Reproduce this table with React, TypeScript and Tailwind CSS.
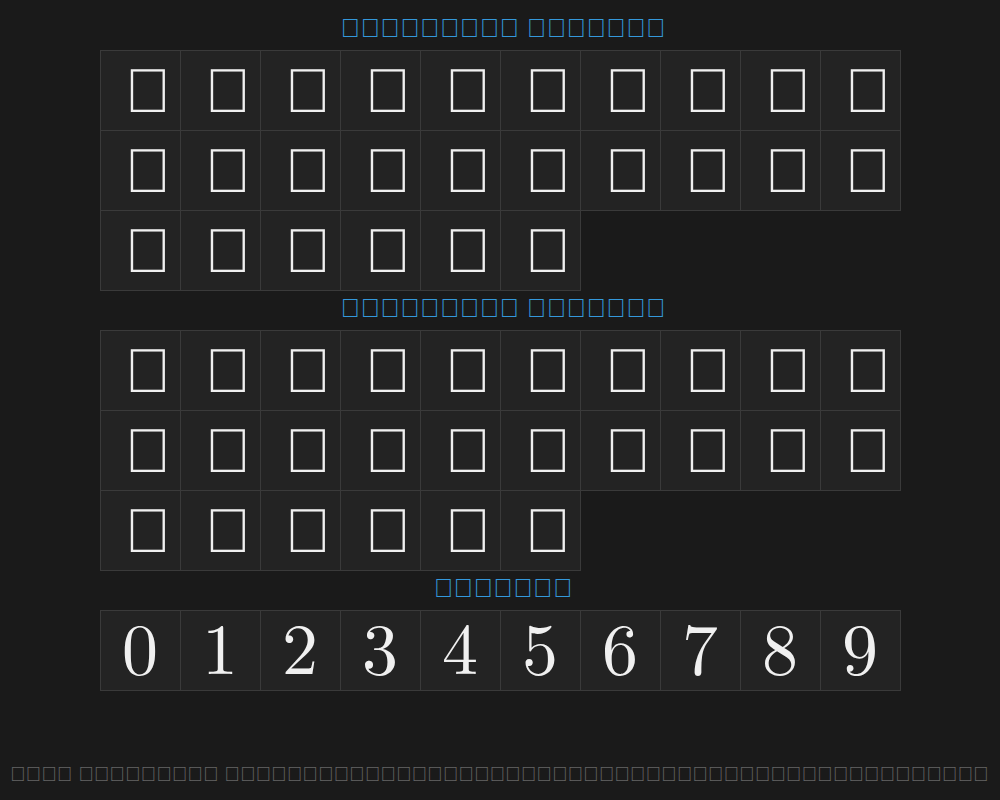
const glyphs = (start: number, n: number) =>
  Array.from({ length: n }, (_, i) => String.fromCharCode(start + i));

const upper = glyphs(0xe000, 26);
const lower = glyphs(0xe020, 26);
const digits = ['0', '1', '2', '3', '4', '5', '6', '7', '8', '9'];

function Heading({ children }: { children: string }) {
  return (
    <h2 className="h-[40px] pt-[3px] pl-[6px] text-center text-[26.5px] leading-[30px] text-[#3498db] font-['Liberation_Sans',sans-serif]">
      {children}
    </h2>
  );
}

function Grid({ chars, digit }: { chars: string[]; digit?: boolean }) {
  return (
    <div className="grid grid-cols-[repeat(10,80px)] auto-rows-[80px] w-[801px] mx-auto">
      {chars.map((c) => (
        <div
          key={c}
          className={
            digit
              ? "w-[81px] h-[81px] pb-[14px] border border-[#3a3a3a] bg-[#232323] flex items-center justify-center text-[72px] leading-[60px] text-[#f0f0f0] font-['Latin_Modern_Roman',serif]"
              : "w-[81px] h-[81px] pl-[16px] border border-[#3a3a3a] bg-[#232323] flex items-center justify-center text-[62px] text-[#f0f0f0] font-['Liberation_Sans',sans-serif]"
          }
        >
          {c}
        </div>
      ))}
    </div>
  );
}

export default function App() {
  return (
    <div className="relative min-h-screen bg-[#1a1a1a] pt-[10px]">
      <Heading>{glyphs(0xe100, 9).join('') + ' ' + glyphs(0xe110, 7).join('')}</Heading>
      <Grid chars={upper} />
      <Heading>{glyphs(0xe120, 9).join('') + ' ' + glyphs(0xe110, 7).join('')}</Heading>
      <Grid chars={lower} />
      <Heading>{glyphs(0xe130, 7).join('')}</Heading>
      <Grid chars={digits} digit />
      <footer className="absolute bottom-0 left-0 right-0 px-[10px] pb-[14px] whitespace-nowrap overflow-hidden text-[20.8px] leading-[24px] text-[#666666] font-['Liberation_Sans',sans-serif]">
        {glyphs(0xe140, 4).join('') + ' ' + glyphs(0xe150, 9).join('') + ' ' + glyphs(0xe160, 49).join('')}
      </footer>
    </div>
  );
}
